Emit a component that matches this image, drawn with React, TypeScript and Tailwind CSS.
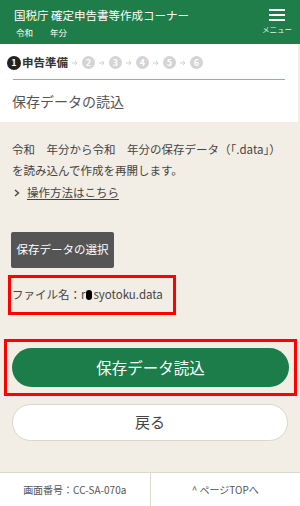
const FONT = "font-['Noto_Sans_CJK_JP','Noto_Sans',sans-serif]";

function StepCircle({ n }: { n: number }) {
  return (
    <span className="flex h-[13px] w-[13px] items-center justify-center rounded-full bg-[#d4d4d4] text-[9px] font-bold leading-none text-white">
      {n}
    </span>
  );
}

function Arrow() {
  return (
    <svg width="6" height="6" viewBox="0 0 6 6" className="mx-[4px]">
      <path d="M0 3 H5 M3 1 L5 3 L3 5" stroke="#cfcfcf" strokeWidth="1" fill="none" />
    </svg>
  );
}

export default function App() {
  return (
    <div className={`${FONT} flex h-[506px] w-[300px] flex-col overflow-hidden bg-[#f2eee5] text-[#333]`}>
      {/* Header */}
      <header className="flex h-[44px] shrink-0 items-start justify-between bg-[#1e7d48] pl-[14px] pr-[8px] text-white">
        <div className="flex flex-col pt-[7px]">
          <span className="text-[11.5px] leading-[16px]">国税庁 確定申告書等作成コーナー</span>
          <span className="mt-[3px] pl-[2px] text-[8.5px] leading-[12px]">令和　　年分</span>
        </div>
        <div className="flex flex-col items-center pt-[9px]">
          <svg width="16" height="12" viewBox="0 0 16 12">
            <rect x="0" y="0" width="16" height="2" fill="white" />
            <rect x="0" y="5" width="16" height="2" fill="white" />
            <rect x="0" y="10" width="16" height="2" fill="white" />
          </svg>
          <span className="mt-[5px] text-[7.5px] leading-none text-[#e6efe9]">メニュー</span>
        </div>
      </header>

      {/* Step + title */}
      <section className="mr-[2px] shrink-0 bg-white">
        <div className="mx-[13px] flex h-[36px] items-center border-b border-[#7fba98] pt-[2px]">
          <span className="-ml-[6px] flex h-[14px] w-[14px] items-center justify-center rounded-full bg-[#222] text-[9px] font-bold leading-none text-white">
            1
          </span>
          <span className="ml-[1px] text-[11.5px] font-bold leading-none text-[#333]">申告準備</span>
          <Arrow />
          <StepCircle n={2} />
          <Arrow />
          <StepCircle n={3} />
          <Arrow />
          <StepCircle n={4} />
          <Arrow />
          <StepCircle n={5} />
          <Arrow />
          <StepCircle n={6} />
        </div>
        <h1 className="flex h-[42px] items-center px-[12px] text-[14px] font-normal text-[#555]">
          保存データの読込
        </h1>
      </section>

      {/* Body */}
      <main className="flex flex-1 flex-col px-[12px] pt-[17px]">
        <p className="text-[11.5px] leading-[21px] text-[#444]">
          令和　年分から令和　年分の保存データ（「.data」）を読み込んで作成を再開します。
        </p>
        <a className="mt-[1px] flex items-center text-[11.5px] leading-[21px] text-[#444]">
          <svg width="8" height="8" viewBox="0 0 8 8" className="ml-[1px] mr-[6px]">
            <path d="M2 1 L5.5 4 L2 7" stroke="#444" strokeWidth="1.4" fill="none" />
          </svg>
          <span className="underline underline-offset-2">操作方法はこちら</span>
        </a>

        <button className="ml-[-1px] mt-[29px] flex h-[36px] w-[103px] items-center justify-center rounded-[2px] bg-[#555555] text-[11.5px] text-white">
          保存データの選択
        </button>

        <div className="ml-[-4px] mt-[7px] flex h-[40px] w-[168px] items-center border-[3px] border-[#f00] pl-[1px] text-[11.5px] text-[#444]">
          ファイル名：r<span className="mx-[1px] inline-block h-[10px] w-[6px] rounded-full bg-black" />syotoku.data
        </div>

        <div className="ml-[-8px] mt-[24px] w-[293px] border-[3px] border-[#f00] px-[5px] py-[6px]">
          <button className="flex h-[39px] w-full items-center justify-center rounded-full bg-[#1c7d4a] text-[15.5px] text-white">
            保存データ読込
          </button>
        </div>

        <button className="mt-[8px] flex h-[37px] w-[276px] items-center justify-center rounded-full border border-[#ddd6c8] bg-white text-[15px] text-[#444]">
          戻る
        </button>
      </main>

      {/* Footer */}
      <footer className="flex h-[34px] shrink-0 border-t border-[#ddd8cd] bg-white text-[10px] text-[#555]">
        <div className="flex flex-1 items-center justify-center border-r border-[#ddd8cd]">
          画面番号：CC-SA-070a
        </div>
        <div className="flex flex-1 items-center justify-center">^ ページTOPへ</div>
      </footer>
    </div>
  );
}
